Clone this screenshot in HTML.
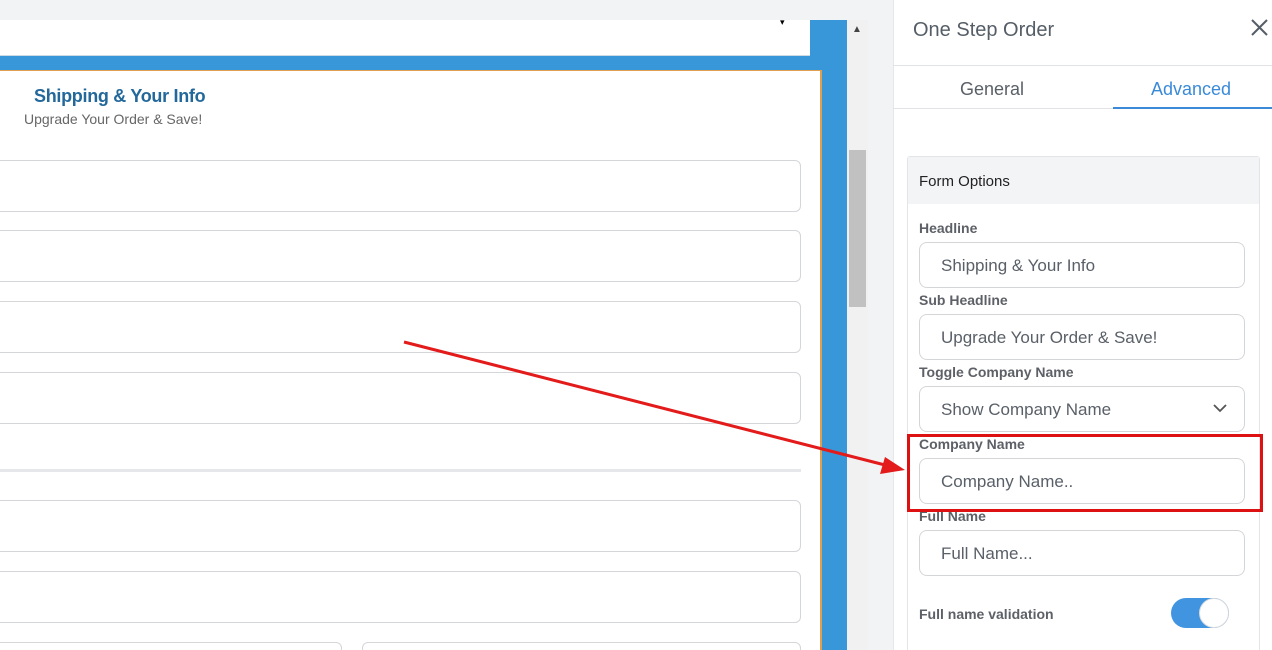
<!DOCTYPE html>
<html><head><style>
*{box-sizing:border-box;margin:0;padding:0}
html,body{width:1272px;height:650px;overflow:hidden}
body{background:#f2f3f5;font-family:"Liberation Sans",sans-serif;position:relative}
.a{position:absolute}
.inp{position:absolute;border:1px solid #d5d6d9;border-radius:6px;background:#fff}
.lbl{position:absolute;left:919px;font-size:14px;font-weight:bold;color:#5d6167}
.rin{position:absolute;left:919px;width:326px;height:46px;border:1px solid #d3d5d9;border-radius:8px;background:#fff;font-size:17px;color:#5a6068;padding:13px 0 0 21px}
</style></head><body>
<div class="a" style="left:0;top:20px;width:810px;height:36px;background:#fff;border-bottom:1px solid #cdd9e3"></div>
<div class="a" style="left:780px;top:17px;font-size:9px">▾</div>
<div class="a" style="left:810px;top:20px;width:37px;height:630px;background:#3897d9"></div>
<div class="a" style="left:0;top:56px;width:847px;height:14px;background:#3897d9"></div>
<div class="a" style="left:0;top:70px;width:822px;height:580px;background:#fff;border-top:1px solid #e0a050;border-right:2px solid #e0a050;overflow:hidden">
<div class="inp" style="left:-10px;top:89px;width:811px;height:52px"></div>
<div class="inp" style="left:-10px;top:159px;width:811px;height:52px"></div>
<div class="inp" style="left:-10px;top:230px;width:811px;height:52px"></div>
<div class="inp" style="left:-10px;top:301px;width:811px;height:52px"></div>
<div class="a" style="left:0;top:398px;width:801px;height:3px;background:#e6e7eb"></div>
<div class="inp" style="left:-10px;top:429px;width:811px;height:52px"></div>
<div class="inp" style="left:-10px;top:500px;width:811px;height:52px"></div>
<div class="inp" style="left:-10px;top:571px;width:352px;height:52px"></div>
<div class="inp" style="left:362px;top:571px;width:439px;height:52px"></div>
</div>
<div class="a" style="left:34px;top:86px;font-size:18px;font-weight:bold;color:#23689b;letter-spacing:-0.3px">Shipping &amp; Your Info</div>
<div class="a" style="left:24px;top:111px;font-size:14px;color:#666">Upgrade Your Order &amp; Save!</div>
<div class="a" style="left:847px;top:20px;width:21px;height:630px;background:#f1f1f1"></div>
<div class="a" style="left:852px;top:24px;font-size:10px;color:#444">▲</div>
<div class="a" style="left:849px;top:150px;width:17px;height:157px;background:#c1c1c1"></div>
<div class="a" style="left:893px;top:0;width:379px;height:650px;background:#fff;border-left:1px solid #e6e7ea;overflow:hidden">
<div class="a" style="left:13px;top:156px;width:353px;height:520px;border:1px solid #e3e4e7;border-radius:3px"></div>
<div class="a" style="left:14px;top:157px;width:351px;height:47px;background:#f3f4f6"></div>
</div>
<div class="a" style="left:913px;top:19px;font-size:20px;color:#555e67">One Step Order</div>
<svg class="a" style="left:1251px;top:19px" width="17" height="17"><path d="M1 1L16 16M16 1L1 16" stroke="#555e67" stroke-width="2"/></svg>
<div class="a" style="left:893px;top:65px;width:379px;height:1px;background:#e2e3e6"></div>
<div class="a" style="left:893px;top:108px;width:379px;height:1px;background:#e2e3e6"></div>
<div class="a" style="left:960px;top:79px;font-size:18px;color:#5a6068">General</div>
<div class="a" style="left:1151px;top:79px;font-size:18px;color:#3a8ad8">Advanced</div>
<div class="a" style="left:1113px;top:107px;width:159px;height:2px;background:#3a8ad8"></div>
<div class="a" style="left:919px;top:173px;font-size:15px;color:#222">Form Options</div>
<div class="lbl" style="top:220px">Headline</div>
<div class="rin" style="top:242px">Shipping &amp; Your Info</div>
<div class="lbl" style="top:292px">Sub Headline</div>
<div class="rin" style="top:314px">Upgrade Your Order &amp; Save!</div>
<div class="lbl" style="top:364px">Toggle Company Name</div>
<div class="rin" style="top:386px">Show Company Name</div>
<svg class="a" style="left:1213px;top:403px" width="14" height="10"><path d="M1 2l6 6 6-6" stroke="#555" stroke-width="1.8" fill="none"/></svg>
<div class="lbl" style="top:436px">Company Name</div>
<div class="rin" style="top:458px">Company Name..</div>
<div class="lbl" style="top:508px">Full Name</div>
<div class="rin" style="top:530px">Full Name...</div>
<div class="lbl" style="top:606px">Full name validation</div>
<div class="a" style="left:1171px;top:598px;width:58px;height:30px;border-radius:15px;background:#4195e0"></div>
<div class="a" style="left:1199px;top:598px;width:30px;height:30px;border-radius:50%;background:#fff;border:1px solid #d8dadf"></div>
<div class="a" style="left:907px;top:434px;width:356px;height:78px;border:3px solid #dd1111"></div>
<svg class="a" style="left:0;top:0" width="1272" height="650"><line x1="404" y1="342" x2="885" y2="465" stroke="#e31b1b" stroke-width="3"/><polygon points="905,470 880,474 885,457" fill="#e31b1b"/></svg>
</body></html>
